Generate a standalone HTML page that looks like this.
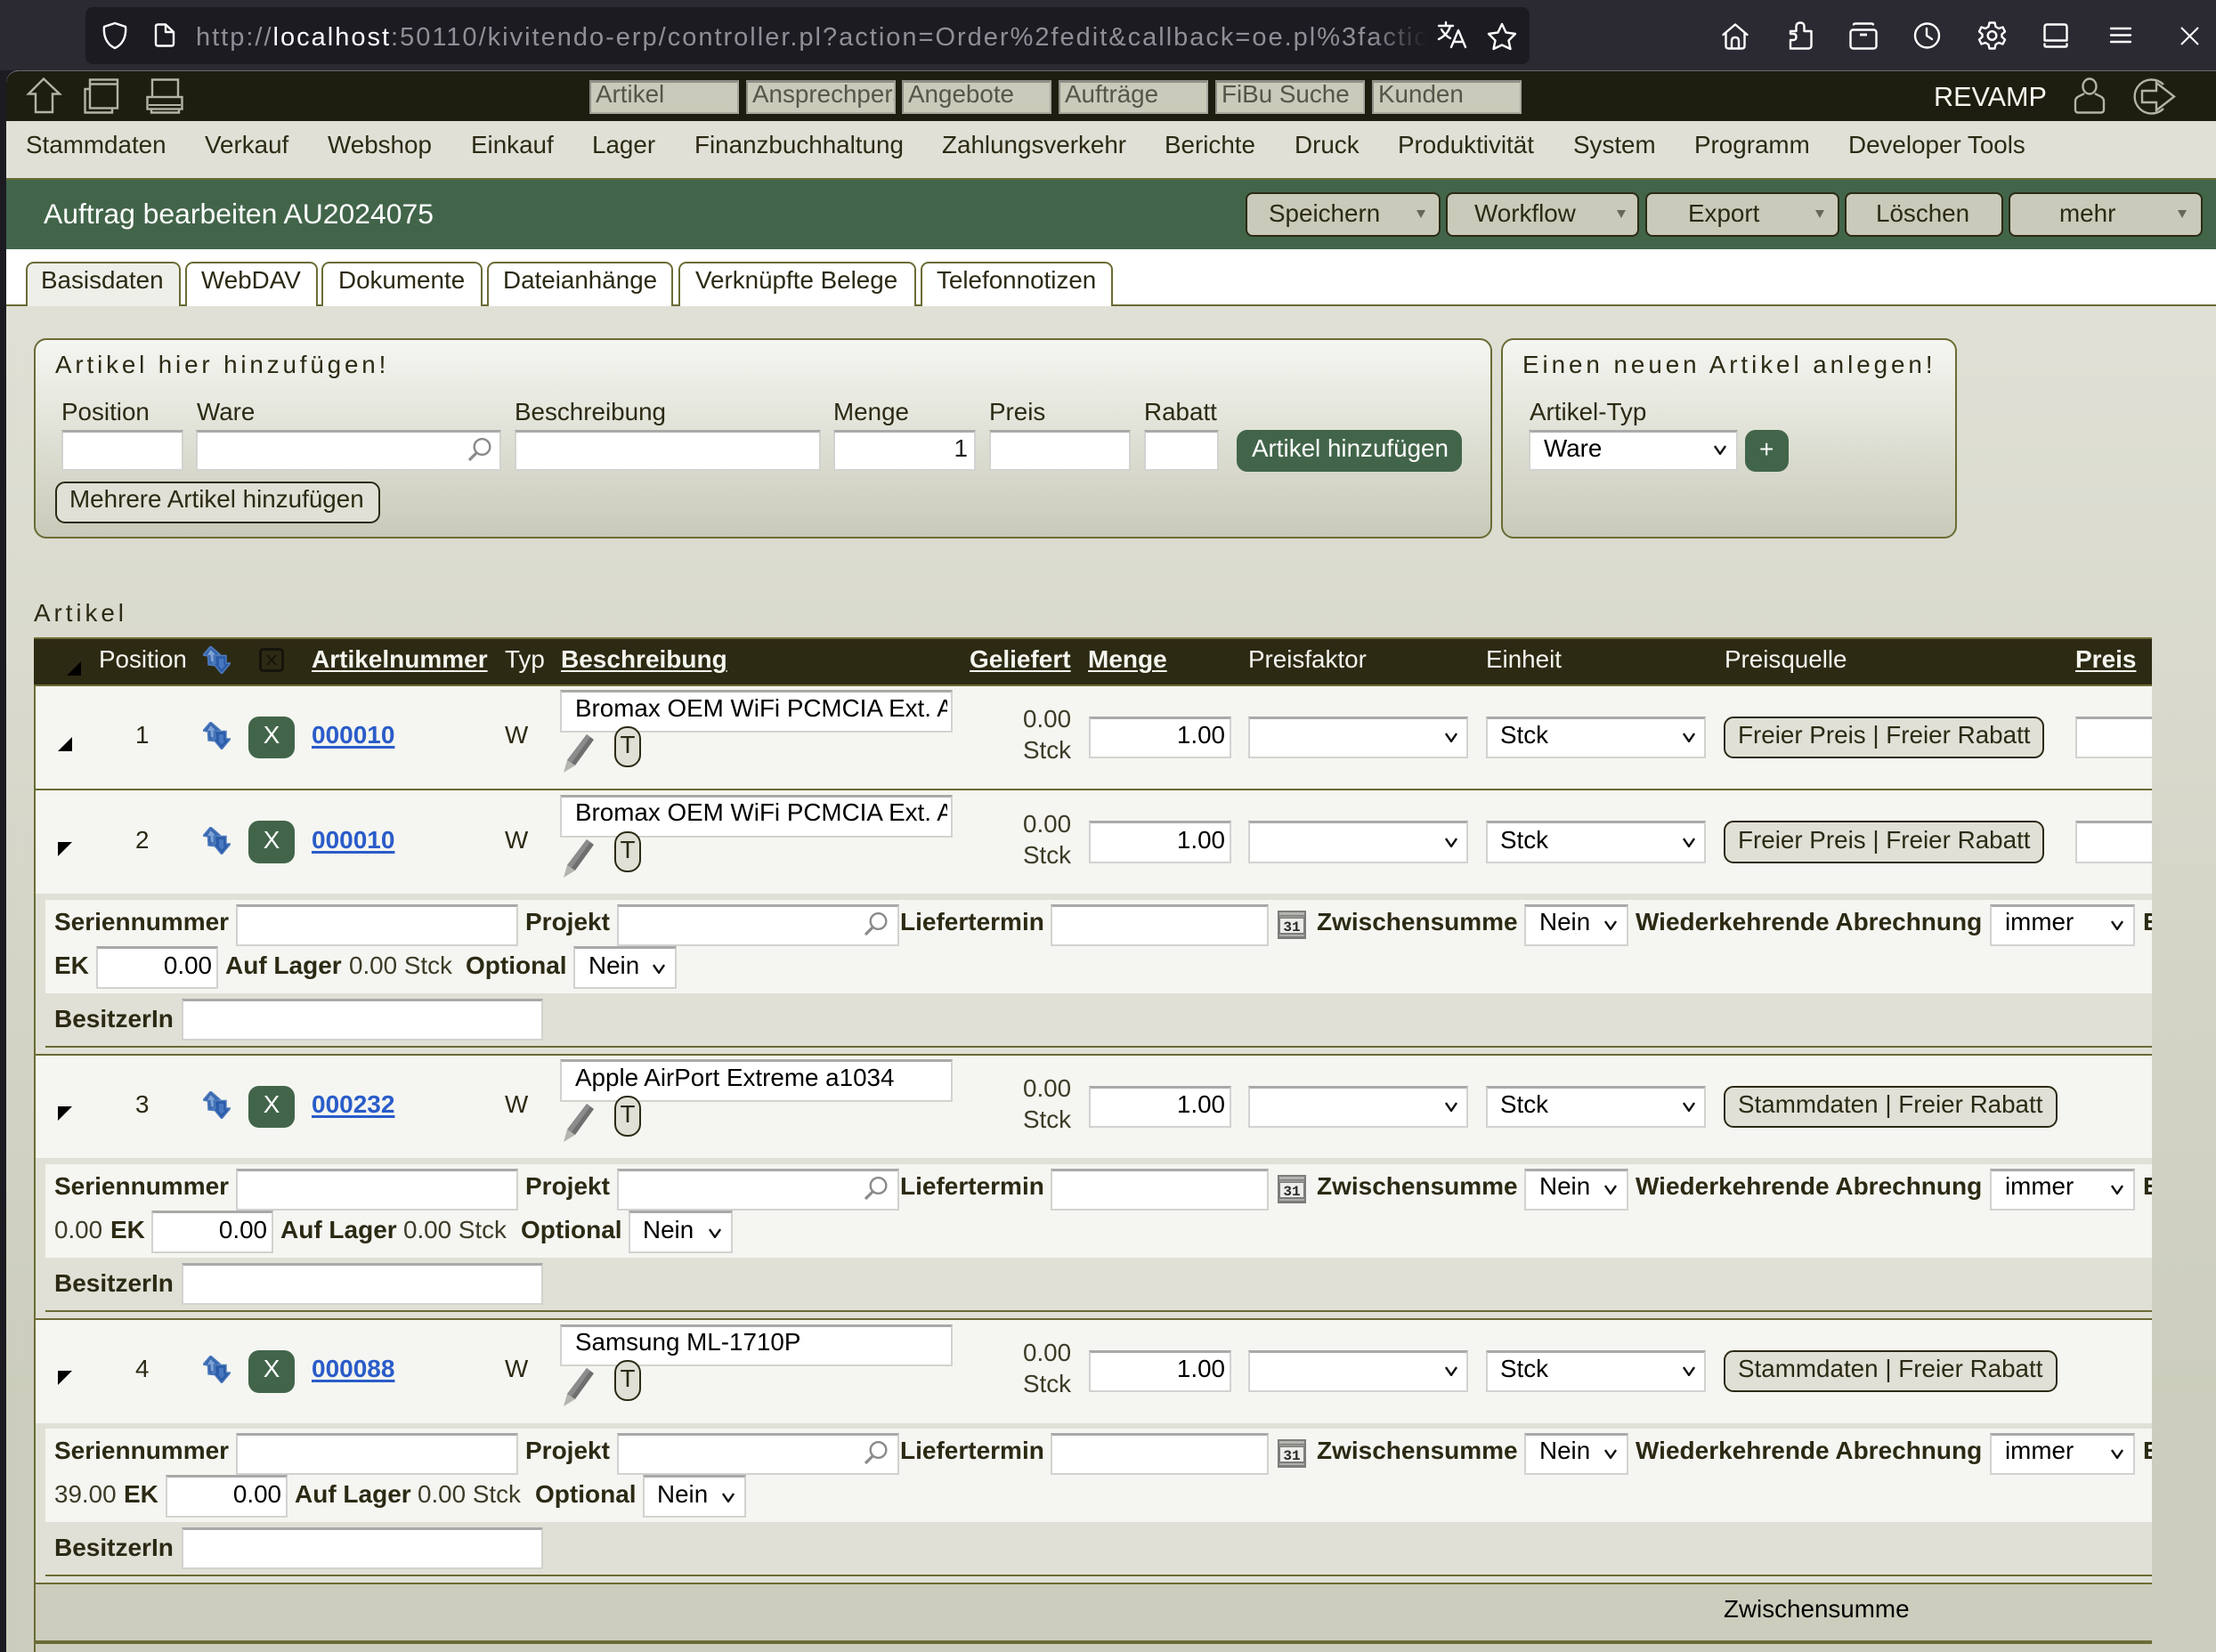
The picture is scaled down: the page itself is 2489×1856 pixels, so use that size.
<!DOCTYPE html>
<html lang="de"><head><meta charset="utf-8"><title>Auftrag bearbeiten</title>
<style>
html,body{margin:0;padding:0;width:2489px;height:1856px;overflow:hidden;background:#1c1b22}
body{position:relative;font-family:"Liberation Sans",sans-serif;font-size:27.8px;color:#2c2a14}
div,svg,span.a{position:absolute}
svg{display:block;overflow:visible}
svg[width="14"]{width:16px;height:11px;margin:-1px 0 0 -1px}
.t{position:absolute;white-space:nowrap;line-height:32px;height:32px;margin-top:1px}
.b{font-weight:bold;font-size:28px}
.k{color:#000}
.g{color:#3d3b28}
.w{color:#f4f5ee}
.ip{background:#fff;border:2px solid #d2d2d0;border-top:3px solid #a9a9a9;box-sizing:border-box}
.bt{box-sizing:border-box;border:2px solid #2c2a14;background:#e0e0d6;border-radius:11px}
.gb{background:#42654a;border-radius:12px}
.hb{box-sizing:border-box;border:2px solid #2c2a14;background:#c9cab9;border-radius:8px;top:216px;height:50px}
.qi{background:#c9cab9;border:2px solid #8f8f88;border-bottom-color:#a8a89f;border-right-color:#a8a89f;border-top-width:3px;box-sizing:border-box;top:90px;width:168px;height:38px;overflow:hidden}
.qi span{position:absolute;left:5px;top:-3px;line-height:32px;color:#55554a;white-space:nowrap}
.tab{box-sizing:border-box;border:2px solid #6b6b35;border-bottom:none;border-radius:9px 9px 0 0;top:294px;height:50px;background:#fff}
.hl{text-decoration:underline;text-decoration-thickness:2px;text-underline-offset:3px}
.lk{color:#2a5cc9;font-weight:bold;font-size:28px;text-decoration:underline;text-decoration-thickness:2.5px;text-underline-offset:3px}
.car{width:0;height:0;border-left:5px solid transparent;border-right:5px solid transparent;border-top:9px solid #66665a;top:236px}
.tab-t{top:298px}
.r{left:0;width:2417px;height:0}
.ic{fill:none;stroke:#fff;stroke-width:2.4;stroke-linecap:round;stroke-linejoin:round}
.ip2{fill:none;stroke:#b3b3a6;stroke-width:2.4}
.ch{fill:none;stroke:#111;stroke-width:2.2}
.sq{left:51px;width:2366px}
</style></head><body>

<svg width="0" height="0" style="position:absolute">
<defs>
<symbol id="sort" viewBox="0 0 31 31">
<path d="M8.500 0 19 9 15.500 10.500 16.500 22 6 21 5.500 11 0 10Z" fill="#3a68b0" stroke="#4f7dbd" stroke-width="1.400"/>
<path d="M8.500 4 13.500 9 11.500 10 12 17.500 9 17 8.500 10 5 10Z" fill="#7fa3d6"/>
<path d="M13 10.500 26 10.500 26 19 31 19 21 31 11 19 14 19Z" fill="#2c5ca8" stroke="#4f7dbd" stroke-width="1.400"/>
<path d="M18 14 23 14 23 21 25 21 21 26 17 21 18 21Z" fill="#4a78c0"/>
</symbol>
<symbol id="pen" viewBox="0 0 34 43">
<path d="M26 0 34 6 13 35 4 29Z" fill="#6f6f6f"/>
<path d="M26 0 30 3 9 32 4 29Z" fill="#8c8c8c"/>
<path d="M4 29 13 35 0 43Z" fill="#b5b5b0"/>
</symbol>
<symbol id="cal" viewBox="0 0 32 32">
<rect x="0" y="0" width="32" height="32" fill="#7c7c7a"/>
<rect x="2" y="2" width="28" height="3" fill="#b4b4b0"/>
<rect x="2" y="6" width="28" height="2" fill="#969692"/>
<rect x="3" y="9" width="26" height="16" fill="#ececE8"/>
<rect x="2" y="27" width="28" height="2" fill="#aeaeaa"/>
<text x="16" y="23" font-family="Liberation Mono,monospace" font-size="16" font-weight="bold" text-anchor="middle" fill="#2a2a2a">31</text>
</symbol>
<symbol id="mag" viewBox="0 0 26 26">
<circle cx="15.500" cy="10" r="8.800" fill="none" stroke="#8a8a8a" stroke-width="2.400"/>
<path d="M9 17 1 25" stroke="#8a8a8a" stroke-width="3.200"/>
</symbol>
<symbol id="chev" viewBox="0 0 14 10"><path class="ch" d="M1.500 1 7 9 12.500 1"/></symbol>
</defs>
</svg>

<!-- browser chrome -->
<div style="left:0;top:0;width:2489px;height:79px;background:#2b2a33"></div>
<div style="left:96px;top:8px;width:1622px;height:64px;background:#1c1b22;border-radius:8px"></div>
<svg style="left:114px;top:24px" width="30" height="32" viewBox="0 0 30 32"><path class="ic" d="M15 2 27 6C28 17 24 26 15 30 6 26 2 17 3 6Z"/></svg>
<svg style="left:173px;top:26px" width="24" height="27" viewBox="0 0 24 27"><path class="ic" d="M2 4Q2 1.500 4.500 1.500H13L22 10V23Q22 25.500 19.500 25.500H4.500Q2 25.500 2 23Z M13 1.500V10H22"/></svg>
<div style="left:220px;top:20px;width:1382px;height:44px;overflow:hidden">
<span class="t" style="left:0;top:5px;font-size:29px;letter-spacing:2px;color:#8f8f96">http://<span style="color:#fbfbfe">localhost</span>:50110/kivitendo-erp/controller.pl?action=Order%2fedit&amp;callback=oe.pl%3faction</span>
<div style="right:0;top:0;width:60px;height:44px;background:linear-gradient(90deg,rgba(28,27,34,0),#1c1b22)"></div>
</div>
<svg style="left:1614px;top:24px" width="34" height="30" viewBox="0 0 34 30"><path class="ic" d="M2 5H18M10 1V5M15 5C13 12 8 17 2 20M5 9C8 14 11 17 15 19"/><path class="ic" d="M16 29 24 10 32 29M19 23H29"/></svg>
<svg style="left:1670px;top:25px" width="34" height="31" viewBox="0 0 34 31"><path class="ic" d="M17 2 21.500 11.500 32 13 24.500 20.500 26.500 30 17 25.500 7.500 30 9.500 20.500 2 13 12.500 11.500Z"/></svg>
<svg style="left:1934px;top:26px" width="30" height="30" viewBox="0 0 30 30"><path class="ic" d="M1.500 13 15 1.500 28.500 13M4.500 11V25.500Q4.500 28.500 7.500 28.500H22.500Q25.500 28.500 25.500 25.500V11M11 28.500V20Q11 16 15 16 19 16 19 20V28.500"/></svg>
<svg style="left:2009px;top:24px" width="27" height="32" viewBox="0 0 27 32"><path class="ic" d="M2 30.500H22Q25.500 30.500 25.500 27V11H17.500V6Q17.500 1.500 13 1.500 8.500 1.500 8.500 6V11H2V14H5Q8.500 14 8.500 17.500 8.500 21 5 21H2Z"/></svg>
<svg style="left:2077px;top:25px" width="32" height="31" viewBox="0 0 32 31"><path class="ic" d="M5 2.500Q5 1.500 8 1.500H24Q27 1.500 27 2.500"/><rect class="ic" x="1.500" y="8.500" width="29" height="21" rx="3"/><path d="M12 14H20" stroke="#fff" stroke-width="2.800"/></svg>
<svg style="left:2149px;top:25px" width="31" height="30" viewBox="0 0 31 30"><circle class="ic" cx="15.500" cy="15" r="13.500"/><path class="ic" d="M15 7V15L21 19"/></svg>
<svg style="left:2222px;top:24px" width="31" height="32" viewBox="0 0 31 32"><circle class="ic" cx="15.500" cy="16" r="4.800"/><path class="ic" d="M12.500 1.500H18.500L19.500 6 23 8 27.500 6.500 30 11.500 26.500 14.500V17.500L30 20.500 27.500 25.500 23 24 19.500 26 18.500 30.500H12.500L11.500 26 8 24 3.500 25.500 1 20.500 4.500 17.500V14.500L1 11.500 3.500 6.500 8 8 11.500 6Z"/></svg>
<svg style="left:2295px;top:26px" width="28" height="28" viewBox="0 0 28 28"><path class="ic" d="M1.500 19.500V4.500Q1.500 1.500 4.500 1.500H23.500Q26.500 1.500 26.500 4.500V19.500Z M1.500 23.500V25Q1.500 26.500 3 26.500H25Q26.500 26.500 26.500 25V23.500"/></svg>
<svg style="left:2370px;top:30px" width="24" height="19" viewBox="0 0 24 19"><path class="ic" d="M1 2H23M1 9.500H23M1 17H23"/></svg>
<svg style="left:2449px;top:30px" width="21" height="21" viewBox="0 0 21 21"><path d="M1 1 20 20M20 1 1 20" stroke="#fff" stroke-width="2" fill="none"/></svg>

<!-- page -->
<div id="pg" style="left:7px;top:79px;width:2482px;height:1777px;background:linear-gradient(180deg,#e0e0d6 0,#e0e0d6 265px,#cccdbc 1500px);border-top-left-radius:14px;overflow:hidden"></div>
<div style="left:7px;top:79px;width:2482px;height:57px;background:#1e1e10;border-top:1px solid #6a6a70;box-sizing:border-box;border-top-left-radius:14px"></div>
<div style="left:7px;top:136px;width:2482px;height:64px;background:#e0e0d6"></div>
<div style="left:7px;top:200px;width:2482px;height:2px;background:#6b6b35"></div>
<div style="left:7px;top:202px;width:2482px;height:78px;background:#42654a"></div>
<div style="left:7px;top:280px;width:2482px;height:62px;background:#fff"></div>
<div style="left:7px;top:342px;width:2482px;height:2px;background:#6b6b35"></div>

<!-- top icons -->
<svg style="left:30px;top:87px" width="39" height="41" viewBox="0 0 39 41"><path class="ip2" d="M19 1.500 37 18.500H29V39H10V18.500H2Z"/></svg>
<svg style="left:94px;top:88px" width="40" height="40" viewBox="0 0 40 40"><path class="ip2" d="M6.500 12H1.500V38.500H32V33"/><rect class="ip2" x="7" y="1.500" width="31" height="32"/><path class="ip2" d="M7 6.500H38"/></svg>
<svg style="left:164px;top:88px" width="42" height="40" viewBox="0 0 42 40"><path class="ip2" d="M7 21V1.500H36V21"/><rect class="ip2" x="1.500" y="21" width="39" height="13.500"/><path class="ip2" d="M6 34.500V38.500H37V34.500"/><path d="M3 30H39" stroke="#b3b3a6" stroke-width="2"/></svg>

<div class="qi" style="left:662px"><span>Artikel</span></div>
<div class="qi" style="left:838px"><span>Ansprechperson</span></div>
<div class="qi" style="left:1013px"><span>Angebote</span></div>
<div class="qi" style="left:1189px"><span>Aufträge</span></div>
<div class="qi" style="left:1365px"><span>FiBu Suche</span></div>
<div class="qi" style="left:1541px"><span>Kunden</span></div>

<span class="t w" style="left:2172px;top:92px;font-size:30.600px;color:#f7f7f0">REVAMP</span>
<svg style="left:2329px;top:87px" width="36" height="41" viewBox="0 0 36 41"><ellipse class="ip2" cx="18" cy="10" rx="7.500" ry="8.500"/><path class="ip2" d="M12 18C8 21 2 21 2 27V36Q2 39.500 5 39.500H31Q34 39.500 34 36V27C34 21 28 21 24 18"/></svg>
<svg style="left:2394px;top:88px" width="50" height="41" viewBox="0 0 50 41"><path class="ip2" d="M36 7A19 19 0 1 0 36 34"/><path class="ip2" d="M12 14H28V5L48 20.500 28 36V27H12Z"/></svg>

<!-- menu -->
<span class="t" style="left:29px;top:146px">Stammdaten</span>
<span class="t" style="left:230px;top:146px">Verkauf</span>
<span class="t" style="left:368px;top:146px">Webshop</span>
<span class="t" style="left:529px;top:146px">Einkauf</span>
<span class="t" style="left:665px;top:146px">Lager</span>
<span class="t" style="left:780px;top:146px">Finanzbuchhaltung</span>
<span class="t" style="left:1058px;top:146px">Zahlungsverkehr</span>
<span class="t" style="left:1308px;top:146px">Berichte</span>
<span class="t" style="left:1454px;top:146px">Druck</span>
<span class="t" style="left:1570px;top:146px">Produktivität</span>
<span class="t" style="left:1767px;top:146px">System</span>
<span class="t" style="left:1903px;top:146px">Programm</span>
<span class="t" style="left:2076px;top:146px">Developer Tools</span>

<!-- title -->
<span class="t" style="left:49px;top:223px;color:#fff;font-size:31.900px">Auftrag bearbeiten AU2024075</span>
<div class="hb" style="left:1399px;width:219px"></div><span class="t" style="left:1425px;top:223px">Speichern</span><div class="car" style="left:1591px"></div>
<div class="hb" style="left:1624px;width:217px"></div><span class="t" style="left:1656px;top:223px">Workflow</span><div class="car" style="left:1816px"></div>
<div class="hb" style="left:1848px;width:218px"></div><span class="t" style="left:1896px;top:223px">Export</span><div class="car" style="left:2039px"></div>
<div class="hb" style="left:2072px;width:178px"></div><span class="t" style="left:2107px;top:223px">Löschen</span>
<div class="hb" style="left:2256px;width:218px"></div><span class="t" style="left:2313px;top:223px">mehr</span><div class="car" style="left:2446px"></div>

<!-- tabs -->
<div class="tab" style="left:29px;width:174px;background:#eeefe9"></div><span class="t tab-t" style="left:46px">Basisdaten</span>
<div class="tab" style="left:208px;width:149px"></div><span class="t tab-t" style="left:226px">WebDAV</span>
<div class="tab" style="left:361px;width:181px"></div><span class="t tab-t" style="left:380px">Dokumente</span>
<div class="tab" style="left:547px;width:209px"></div><span class="t tab-t" style="left:565px">Dateianhänge</span>
<div class="tab" style="left:762px;width:267px"></div><span class="t tab-t" style="left:781px">Verknüpfte Belege</span>
<div class="tab" style="left:1034px;width:216px"></div><span class="t tab-t" style="left:1052px">Telefonnotizen</span>

<!-- add panels -->
<div style="left:38px;top:380px;width:1638px;height:225px;box-sizing:border-box;border:2px solid #6b6b35;border-radius:14px;background:linear-gradient(180deg,#f5f6f1,#c9cab9)"></div>
<div style="left:1686px;top:380px;width:512px;height:225px;box-sizing:border-box;border:2px solid #6b6b35;border-radius:14px;background:linear-gradient(180deg,#f5f6f1,#c9cab9)"></div>
<span class="t" style="left:62px;top:393px;letter-spacing:3.850px">Artikel hier hinzufügen!</span>
<span class="t" style="left:1710px;top:393px;letter-spacing:3.950px">Einen neuen Artikel anlegen!</span>
<span class="t" style="left:69px;top:446px">Position</span>
<span class="t" style="left:221px;top:446px">Ware</span>
<span class="t" style="left:578px;top:446px">Beschreibung</span>
<span class="t" style="left:936px;top:446px">Menge</span>
<span class="t" style="left:1111px;top:446px">Preis</span>
<span class="t" style="left:1285px;top:446px">Rabatt</span>
<span class="t" style="left:1718px;top:446px">Artikel-Typ</span>
<div class="ip" style="left:69px;top:483px;width:137px;height:46px"></div>
<div class="ip" style="left:220px;top:483px;width:343px;height:46px"></div>
<svg style="left:526px;top:492px" width="26" height="26"><use href="#mag"/></svg>
<div class="ip" style="left:578px;top:483px;width:344px;height:46px"></div>
<div class="ip" style="left:936px;top:483px;width:160px;height:46px"></div>
<span class="t" style="left:1041px;width:46px;top:487px;text-align:right;color:#222">1</span>
<div class="ip" style="left:1111px;top:483px;width:159px;height:46px"></div>
<div class="ip" style="left:1285px;top:483px;width:84px;height:46px"></div>
<div class="gb" style="left:1389px;top:483px;width:253px;height:47px"></div>
<span class="t" style="left:1406px;top:487px;color:#fff">Artikel hinzufügen</span>
<div class="ip" style="left:1717px;top:483px;width:235px;height:46px"></div>
<span class="t k" style="left:1734px;top:487px">Ware</span>
<svg style="left:1925px;top:501px" width="14" height="10"><use href="#chev"/></svg>
<div class="gb" style="left:1960px;top:483px;width:49px;height:47px"></div>
<span class="t" style="left:1976px;top:488px;color:#fff;font-size:28px">+</span>
<div class="bt" style="left:62px;top:541px;width:365px;height:47px"></div>
<span class="t" style="left:78px;top:544px">Mehrere Artikel hinzufügen</span>

<span class="t" style="left:38px;top:672px;letter-spacing:3.950px">Artikel</span>

<!-- table header -->
<div style="left:38px;top:716px;width:2379px;height:55px;background:#2d2a14;border-top:2px solid #6b6b35;border-bottom:2px solid #6b6b35;box-sizing:border-box"></div>
<svg style="left:75px;top:743px" width="16" height="16"><polygon points="16,0 16,16 0,16" fill="#000"/></svg>
<span class="t w" style="left:111px;top:724px">Position</span>
<svg style="left:228px;top:726px" width="31" height="31"><use href="#sort"/></svg>
<svg style="left:291px;top:728px" width="28" height="27" viewBox="0 0 28 27"><rect x="1.500" y="1.500" width="25" height="24" rx="3" fill="none" stroke="#14140a" stroke-width="3"/><path d="M9 8 19 19M19 8 9 19" stroke="#14140a" stroke-width="1.800"/></svg>
<span class="t w b hl" style="left:350px;top:724px">Artikelnummer</span>
<span class="t w" style="left:567px;top:724px">Typ</span>
<span class="t w b hl" style="left:630px;top:724px">Beschreibung</span>
<span class="t w b hl" style="left:1089px;top:724px">Geliefert</span>
<span class="t w b hl" style="left:1222px;top:724px">Menge</span>
<span class="t w" style="left:1402px;top:724px">Preisfaktor</span>
<span class="t w" style="left:1669px;top:724px">Einheit</span>
<span class="t w" style="left:1937px;top:724px">Preisquelle</span>
<span class="t w b hl" style="left:2331px;top:724px">Preis</span>

<!-- row backgrounds -->
<div style="left:38px;top:771px;width:2px;height:1085px;background:#6b6b35"></div>
<div style="left:40px;top:771px;width:2377px;height:115px;background:#f5f6f1"></div>
<div style="left:38px;top:886px;width:2379px;height:2px;background:#6b6b35"></div>
<div style="left:40px;top:888px;width:2377px;height:116px;background:#f5f6f1"></div>
<div style="left:40px;top:1186px;width:2377px;height:115px;background:#f5f6f1"></div>
<div style="left:40px;top:1483px;width:2377px;height:116px;background:#f5f6f1"></div>

<!-- ROW 1 -->
<div class="r" style="top:771px">
<svg style="left:65px;top:57px" width="16" height="16"><polygon points="16,0 16,16 0,16" fill="#000"/></svg>
<span class="t" style="left:152px;top:38px">1</span>
<svg style="left:228px;top:40px" width="31" height="31"><use href="#sort"/></svg>
<div class="gb" style="left:279px;top:34px;width:52px;height:47px"></div><span class="t" style="left:279px;width:52px;text-align:center;top:38px;color:#fff">X</span>
<span class="t lk" style="left:350px;top:38px">000010</span>
<span class="t" style="left:567px;top:38px">W</span>
<div class="ip" style="left:629px;top:4px;width:441px;height:48px"></div><span class="t k" style="left:646px;top:8px;width:418px;overflow:hidden">Bromax OEM WiFi PCMCIA Ext. Adapter</span>
<svg style="left:633px;top:54px" width="34" height="43"><use href="#pen"/></svg>
<div class="bt" style="left:690px;top:45px;width:30px;height:46px;border-radius:14px"></div><span class="t" style="left:690px;width:30px;text-align:center;top:49px">T</span>
<span class="t g" style="left:1149px;top:20px">0.00</span><span class="t g" style="left:1149px;top:55px">Stck</span>
<div class="ip" style="left:1223px;top:34px;width:160px;height:47px"></div><span class="t k" style="left:1275px;width:101px;text-align:right;top:38px">1.00</span>
<div class="ip" style="left:1402px;top:34px;width:247px;height:47px"></div><svg style="left:1623px;top:53px" width="14" height="10"><use href="#chev"/></svg>
<div class="ip" style="left:1669px;top:34px;width:247px;height:47px"></div><span class="t k" style="left:1685px;top:38px">Stck</span><svg style="left:1890px;top:53px" width="14" height="10"><use href="#chev"/></svg>
<div class="bt" style="left:1936px;top:34px;width:360px;height:47px"></div><span class="t" style="left:1952px;top:38px">Freier Preis | Freier Rabatt</span>
<div class="ip" style="left:2331px;top:34px;width:86px;height:47px;border-right:none"></div>
</div>

<!-- ROW 2 -->
<div class="r" style="top:889px">
<svg style="left:65px;top:57px" width="16" height="16"><polygon points="0,0 16,0 0,16" fill="#000"/></svg>
<span class="t" style="left:152px;top:38px">2</span>
<svg style="left:228px;top:40px" width="31" height="31"><use href="#sort"/></svg>
<div class="gb" style="left:279px;top:33px;width:52px;height:48px"></div><span class="t" style="left:279px;width:52px;text-align:center;top:38px;color:#fff">X</span>
<span class="t lk" style="left:350px;top:38px">000010</span>
<span class="t" style="left:567px;top:38px">W</span>
<div class="ip" style="left:629px;top:4px;width:441px;height:48px"></div><span class="t k" style="left:646px;top:7px;width:418px;overflow:hidden">Bromax OEM WiFi PCMCIA Ext. Adapter</span>
<svg style="left:633px;top:54px" width="34" height="43"><use href="#pen"/></svg>
<div class="bt" style="left:690px;top:45px;width:30px;height:46px;border-radius:14px"></div><span class="t" style="left:690px;width:30px;text-align:center;top:49px">T</span>
<span class="t g" style="left:1149px;top:20px">0.00</span><span class="t g" style="left:1149px;top:55px">Stck</span>
<div class="ip" style="left:1223px;top:33px;width:160px;height:48px"></div><span class="t k" style="left:1275px;width:101px;text-align:right;top:38px">1.00</span>
<div class="ip" style="left:1402px;top:33px;width:247px;height:48px"></div><svg style="left:1623px;top:53px" width="14" height="10"><use href="#chev"/></svg>
<div class="ip" style="left:1669px;top:33px;width:247px;height:48px"></div><span class="t k" style="left:1685px;top:38px">Stck</span><svg style="left:1890px;top:53px" width="14" height="10"><use href="#chev"/></svg>
<div class="bt" style="left:1936px;top:33px;width:360px;height:48px"></div><span class="t" style="left:1952px;top:38px">Freier Preis | Freier Rabatt</span>
<div class="ip" style="left:2331px;top:33px;width:86px;height:48px;border-right:none"></div>
</div>

<!-- SUB 2 -->
<div class="r" style="top:0">
<div style="left:40px;top:1004px;width:2377px;height:180px;background:#e0e0d6"></div>
<div class="sq" style="top:1011px;height:105px;background:#f5f6f1"></div>
<div class="sq" style="top:1175px;height:2px;background:#6b6b35"></div>
<div style="left:38px;top:1184px;width:2379px;height:2px;background:#6b6b35"></div>
<span class="t b" style="left:61px;top:1019px">Seriennummer</span>
<div class="ip" style="left:265px;top:1016px;width:317px;height:47px"></div>
<span class="t b" style="left:590px;top:1019px">Projekt</span>
<div class="ip" style="left:693px;top:1016px;width:317px;height:47px"></div><svg style="left:971px;top:1025px" width="26" height="26"><use href="#mag"/></svg>
<span class="t b" style="left:1011px;top:1019px">Liefertermin</span>
<div class="ip" style="left:1180px;top:1016px;width:245px;height:47px"></div>
<svg style="left:1435px;top:1023px" width="32" height="32"><use href="#cal"/></svg>
<span class="t b" style="left:1479px;top:1019px">Zwischensumme</span>
<div class="ip" style="left:1712px;top:1016px;width:117px;height:47px"></div><span class="t k" style="left:1729px;top:1019px">Nein</span><svg style="left:1802px;top:1035px" width="14" height="10"><use href="#chev"/></svg>
<span class="t b" style="left:1837px;top:1019px">Wiederkehrende Abrechnung</span>
<div class="ip" style="left:2235px;top:1016px;width:163px;height:47px"></div><span class="t k" style="left:2252px;top:1019px">immer</span><svg style="left:2371px;top:1035px" width="14" height="10"><use href="#chev"/></svg>
<span class="t b" style="left:2407px;top:1019px;width:10px;overflow:hidden">E</span>
<span class="t b" style="left:61px;top:1068px">EK</span>
<div class="ip" style="left:108px;top:1063px;width:137px;height:48px"></div><span class="t k" style="left:150px;width:88px;text-align:right;top:1068px">0.00</span>
<span class="t b" style="left:253px;top:1068px">Auf Lager</span><span class="t g" style="left:392px;top:1068px">0.00 Stck</span>
<span class="t b" style="left:523px;top:1068px">Optional</span>
<div class="ip" style="left:644px;top:1063px;width:116px;height:48px"></div><span class="t k" style="left:661px;top:1068px">Nein</span><svg style="left:733px;top:1084px" width="14" height="10"><use href="#chev"/></svg>
<span class="t b" style="left:61px;top:1128px">BesitzerIn</span>
<div class="ip" style="left:204px;top:1122px;width:406px;height:47px"></div>
</div>

<!-- ROW 3 -->
<div class="r" style="top:1186px">
<svg style="left:65px;top:57px" width="16" height="16"><polygon points="0,0 16,0 0,16" fill="#000"/></svg>
<span class="t" style="left:152px;top:38px">3</span>
<svg style="left:228px;top:40px" width="31" height="31"><use href="#sort"/></svg>
<div class="gb" style="left:279px;top:34px;width:52px;height:47px"></div><span class="t" style="left:279px;width:52px;text-align:center;top:38px;color:#fff">X</span>
<span class="t lk" style="left:350px;top:38px">000232</span>
<span class="t" style="left:567px;top:38px">W</span>
<div class="ip" style="left:629px;top:4px;width:441px;height:48px"></div><span class="t k" style="left:646px;top:8px;width:418px;overflow:hidden">Apple AirPort Extreme a1034</span>
<svg style="left:633px;top:54px" width="34" height="43"><use href="#pen"/></svg>
<div class="bt" style="left:690px;top:45px;width:30px;height:46px;border-radius:14px"></div><span class="t" style="left:690px;width:30px;text-align:center;top:49px">T</span>
<span class="t g" style="left:1149px;top:20px">0.00</span><span class="t g" style="left:1149px;top:55px">Stck</span>
<div class="ip" style="left:1223px;top:34px;width:160px;height:47px"></div><span class="t k" style="left:1275px;width:101px;text-align:right;top:38px">1.00</span>
<div class="ip" style="left:1402px;top:34px;width:247px;height:47px"></div><svg style="left:1623px;top:53px" width="14" height="10"><use href="#chev"/></svg>
<div class="ip" style="left:1669px;top:34px;width:247px;height:47px"></div><span class="t k" style="left:1685px;top:38px">Stck</span><svg style="left:1890px;top:53px" width="14" height="10"><use href="#chev"/></svg>
<div class="bt" style="left:1936px;top:34px;width:375px;height:47px"></div><span class="t" style="left:1952px;top:38px">Stammdaten | Freier Rabatt</span>
</div>

<!-- SUB 3 -->
<div class="r" style="top:297px">
<div style="left:40px;top:1004px;width:2377px;height:180px;background:#e0e0d6"></div>
<div class="sq" style="top:1011px;height:105px;background:#f5f6f1"></div>
<div class="sq" style="top:1175px;height:2px;background:#6b6b35"></div>
<div style="left:38px;top:1184px;width:2379px;height:2px;background:#6b6b35"></div>
<span class="t b" style="left:61px;top:1019px">Seriennummer</span>
<div class="ip" style="left:265px;top:1016px;width:317px;height:47px"></div>
<span class="t b" style="left:590px;top:1019px">Projekt</span>
<div class="ip" style="left:693px;top:1016px;width:317px;height:47px"></div><svg style="left:971px;top:1025px" width="26" height="26"><use href="#mag"/></svg>
<span class="t b" style="left:1011px;top:1019px">Liefertermin</span>
<div class="ip" style="left:1180px;top:1016px;width:245px;height:47px"></div>
<svg style="left:1435px;top:1023px" width="32" height="32"><use href="#cal"/></svg>
<span class="t b" style="left:1479px;top:1019px">Zwischensumme</span>
<div class="ip" style="left:1712px;top:1016px;width:117px;height:47px"></div><span class="t k" style="left:1729px;top:1019px">Nein</span><svg style="left:1802px;top:1035px" width="14" height="10"><use href="#chev"/></svg>
<span class="t b" style="left:1837px;top:1019px">Wiederkehrende Abrechnung</span>
<div class="ip" style="left:2235px;top:1016px;width:163px;height:47px"></div><span class="t k" style="left:2252px;top:1019px">immer</span><svg style="left:2371px;top:1035px" width="14" height="10"><use href="#chev"/></svg>
<span class="t b" style="left:2407px;top:1019px;width:10px;overflow:hidden">E</span>
<span class="t g" style="left:61px;top:1068px">0.00</span><span class="t b" style="left:124px;top:1068px">EK</span>
<div class="ip" style="left:170px;top:1063px;width:137px;height:48px"></div><span class="t k" style="left:212px;width:88px;text-align:right;top:1068px">0.00</span>
<span class="t b" style="left:315px;top:1068px">Auf Lager</span><span class="t g" style="left:453px;top:1068px">0.00 Stck</span>
<span class="t b" style="left:585px;top:1068px">Optional</span>
<div class="ip" style="left:706px;top:1063px;width:117px;height:48px"></div><span class="t k" style="left:722px;top:1068px">Nein</span><svg style="left:796px;top:1084px" width="14" height="10"><use href="#chev"/></svg>
<span class="t b" style="left:61px;top:1128px">BesitzerIn</span>
<div class="ip" style="left:204px;top:1122px;width:406px;height:47px"></div>
</div>

<!-- ROW 4 -->
<div class="r" style="top:1483px">
<svg style="left:65px;top:57px" width="16" height="16"><polygon points="0,0 16,0 0,16" fill="#000"/></svg>
<span class="t" style="left:152px;top:38px">4</span>
<svg style="left:228px;top:40px" width="31" height="31"><use href="#sort"/></svg>
<div class="gb" style="left:279px;top:34px;width:52px;height:48px"></div><span class="t" style="left:279px;width:52px;text-align:center;top:38px;color:#fff">X</span>
<span class="t lk" style="left:350px;top:38px">000088</span>
<span class="t" style="left:567px;top:38px">W</span>
<div class="ip" style="left:629px;top:5px;width:441px;height:47px"></div><span class="t k" style="left:646px;top:8px;width:418px;overflow:hidden">Samsung ML-1710P</span>
<svg style="left:633px;top:54px" width="34" height="43"><use href="#pen"/></svg>
<div class="bt" style="left:690px;top:45px;width:30px;height:46px;border-radius:14px"></div><span class="t" style="left:690px;width:30px;text-align:center;top:49px">T</span>
<span class="t g" style="left:1149px;top:20px">0.00</span><span class="t g" style="left:1149px;top:55px">Stck</span>
<div class="ip" style="left:1223px;top:34px;width:160px;height:47px"></div><span class="t k" style="left:1275px;width:101px;text-align:right;top:38px">1.00</span>
<div class="ip" style="left:1402px;top:34px;width:247px;height:47px"></div><svg style="left:1623px;top:53px" width="14" height="10"><use href="#chev"/></svg>
<div class="ip" style="left:1669px;top:34px;width:247px;height:47px"></div><span class="t k" style="left:1685px;top:38px">Stck</span><svg style="left:1890px;top:53px" width="14" height="10"><use href="#chev"/></svg>
<div class="bt" style="left:1936px;top:34px;width:375px;height:47px"></div><span class="t" style="left:1952px;top:38px">Stammdaten | Freier Rabatt</span>
</div>

<!-- SUB 4 -->
<div class="r" style="top:594px">
<div style="left:40px;top:1005px;width:2377px;height:179px;background:#e0e0d6"></div>
<div class="sq" style="top:1011px;height:105px;background:#f5f6f1"></div>
<div class="sq" style="top:1175px;height:2px;background:#6b6b35"></div>
<div style="left:38px;top:1184px;width:2379px;height:2px;background:#6b6b35"></div>
<span class="t b" style="left:61px;top:1019px">Seriennummer</span>
<div class="ip" style="left:265px;top:1016px;width:317px;height:47px"></div>
<span class="t b" style="left:590px;top:1019px">Projekt</span>
<div class="ip" style="left:693px;top:1016px;width:317px;height:47px"></div><svg style="left:971px;top:1025px" width="26" height="26"><use href="#mag"/></svg>
<span class="t b" style="left:1011px;top:1019px">Liefertermin</span>
<div class="ip" style="left:1180px;top:1016px;width:245px;height:47px"></div>
<svg style="left:1435px;top:1023px" width="32" height="32"><use href="#cal"/></svg>
<span class="t b" style="left:1479px;top:1019px">Zwischensumme</span>
<div class="ip" style="left:1712px;top:1016px;width:117px;height:47px"></div><span class="t k" style="left:1729px;top:1019px">Nein</span><svg style="left:1802px;top:1035px" width="14" height="10"><use href="#chev"/></svg>
<span class="t b" style="left:1837px;top:1019px">Wiederkehrende Abrechnung</span>
<div class="ip" style="left:2235px;top:1016px;width:163px;height:47px"></div><span class="t k" style="left:2252px;top:1019px">immer</span><svg style="left:2371px;top:1035px" width="14" height="10"><use href="#chev"/></svg>
<span class="t b" style="left:2407px;top:1019px;width:10px;overflow:hidden">E</span>
<span class="t g" style="left:61px;top:1068px">39.00</span><span class="t b" style="left:139px;top:1068px">EK</span>
<div class="ip" style="left:186px;top:1063px;width:137px;height:48px"></div><span class="t k" style="left:228px;width:88px;text-align:right;top:1068px">0.00</span>
<span class="t b" style="left:331px;top:1068px">Auf Lager</span><span class="t g" style="left:469px;top:1068px">0.00 Stck</span>
<span class="t b" style="left:601px;top:1068px">Optional</span>
<div class="ip" style="left:722px;top:1063px;width:116px;height:48px"></div><span class="t k" style="left:738px;top:1068px">Nein</span><svg style="left:811px;top:1084px" width="14" height="10"><use href="#chev"/></svg>
<span class="t b" style="left:61px;top:1128px">BesitzerIn</span>
<div class="ip" style="left:204px;top:1122px;width:406px;height:47px"></div>
</div>

<!-- bottom -->
<div style="left:40px;top:1780px;width:2377px;height:63px;background:#cccdbc"></div>
<span class="t k" style="left:1936px;top:1791px">Zwischensumme</span>
<div style="left:38px;top:1843px;width:2379px;height:4px;background:#6b6b35"></div>
<div style="left:40px;top:1847px;width:2377px;height:9px;background:#cccdbc"></div>
</body></html>
